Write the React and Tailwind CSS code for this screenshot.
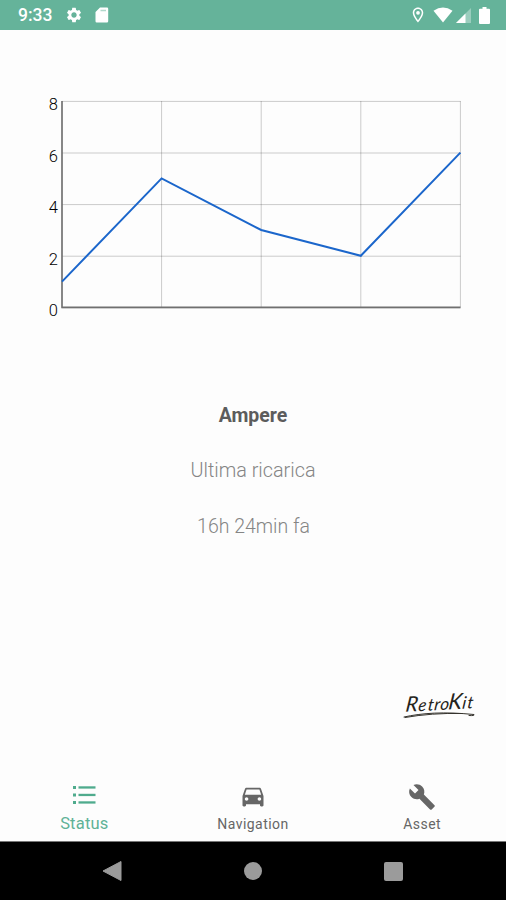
import React from 'react';
import { MdSettings, MdDirectionsCar, MdBuild, MdOutlineLocationOn } from 'react-icons/md';

const points = [1, 5, 3, 2, 6];
const ticks = [8, 6, 4, 2, 0];

const LineChart = () => {
  const left = 62;
  const top = 5;
  const stepX = 99.6;
  const unitY = 25.8;
  const bottom = top + unitY * 8;
  const line = points.map((v, i) => `${left + i * stepX},${bottom - v * unitY}`).join(' ');

  return (
    <svg className="block w-full h-[225px]" viewBox="0 0 506 225">
      {ticks.map((t) => (
        <g key={t}>
          <line x1={left} x2={460.5} y1={bottom - t * unitY + 0.4} y2={bottom - t * unitY + 0.4} stroke="#000" strokeOpacity="0.2" />
          <text x="58" y={bottom - t * unitY + 9} textAnchor="end" className="font-['Roboto',sans-serif] text-[16.5px] font-light" fill="#000">
            {t}
          </text>
        </g>
      ))}
      {points.map((_, i) => (
        <line key={i} x1={left + i * stepX} x2={left + i * stepX} y1={top} y2={bottom} stroke="#000" strokeOpacity="0.2" />
      ))}
      <path d={`M${left} ${top}V${bottom}H460.5`} fill="none" stroke="#707070" strokeWidth="1.6" />
      <polyline points={line} fill="none" stroke="#1b66cb" strokeWidth="2" />
    </svg>
  );
};

const StatusBar = () => (
  <div className="h-[30px] bg-[#65b39a] text-white flex items-center justify-between pl-[18px] pr-[16px]">
    <div className="flex items-center">
      <span className="text-[17.5px] font-medium leading-none w-[47px] pt-[2px]">9:33</span>
      <MdSettings size={18} />
      <svg className="ml-3 w-[14px] h-[16px]" viewBox="0 0 14 16">
        <path d="M5 .5h7A1.2 1.2 0 0 1 13.2 1.7v12.6A1.2 1.2 0 0 1 12 15.5H1.7A1.2 1.2 0 0 1 .5 14.3V5z" fill="#fff" />
        <path d="M5.5 3.5H11" stroke="#65b39a" strokeOpacity="0.5" strokeWidth="1.5" />
      </svg>
    </div>
    <div className="flex items-center">
      <MdOutlineLocationOn size={18} />
      <svg className="ml-[6px] mr-px w-[20px] h-[16px]" viewBox="0 0 20 16">
        <path d="M10 15.5L.5 3.8Q10-3 19.5 3.8z" fill="#fff" />
      </svg>
      <svg className="ml-[2px] w-[15px] h-[15px]" viewBox="0 0 15 15">
        <path d="M15 0v15H0z" fill="#fff" fillOpacity="0.35" />
        <path d="M9.5 5.5V15H0z" fill="#fff" />
      </svg>
      <svg className="ml-[8px] w-[11px] h-[17px]" viewBox="0 0 11 17">
        <path d="M3.5 0h4v1.7H10q1 0 1 1V16q0 1-1 1H1q-1 0-1-1V2.7q0-1 1-1h2.5z" fill="#fff" />
      </svg>
    </div>
  </div>
);

const Logo = () => (
  <svg className="w-[84px] h-[46px]" viewBox="0 -14 84 46">
    <text y="21" className="font-['Lato',sans-serif] italic text-[17px]" fill="#252420" transform="rotate(-3 38 20) skewX(-10) translate(3.5 0)">
      <tspan x="3" className="text-[21px]">R</tspan>
      <tspan x="16 25.5 32 38">etro</tspan>
      <tspan x="46" className="text-[22px]">K</tspan>
      <tspan x="60 65">it</tspan>
    </text>
    <path d="M2 28C20 24 42 22.5 72 25.5Q73 27 67 26.5M3 28.5C20 25.5 40 24 60 24.5" fill="none" stroke="#35332d" strokeWidth="1" strokeLinecap="round" />
  </svg>
);

const ListIcon = () => (
  <svg className="w-[24px] h-[28px]" viewBox="0 0 24 28" fill="#4fab8d">
    {[7, 14.5, 22].map((y) => (
      <g key={y}>
        <rect x="1" y={y} width="3" height="3" />
        <rect x="6.5" y={y + 0.3} width="17" height="2.3" />
      </g>
    ))}
  </svg>
);

const App = () => {
  return (
    <div className="w-full h-[900px] flex flex-col bg-[#fdfdfd] font-['Roboto',sans-serif] overflow-hidden">
      <StatusBar />

      {/* Chart */}
      <div className="pt-[66px]">
        <LineChart />
      </div>

      {/* Last charge */}
      <div className="pt-[81px] flex flex-col items-center gap-[27px] text-[19.8px] leading-[28px] text-[#858585] font-light">
        <h1 className="text-[19.5px] font-bold text-[#5c5c5c]">Ampere</h1>
        <p>Ultima ricarica</p>
        <p className="text-[19.5px] pl-px pt-px">16h 24min fa</p>
      </div>

      <div className="flex-1 flex justify-end items-end pr-[20px] pb-[58px]">
        <Logo />
      </div>

      {/* Bottom tabs */}
      <div className="h-[62px] grid grid-cols-3 text-[#666666]">
        <div className="flex flex-col items-center text-[#5fb297]">
          <ListIcon />
          <span className="text-[16.5px] leading-[20px] pt-[7px] tracking-[0.2px]">Status</span>
        </div>
        <div className="flex flex-col items-center">
          <MdDirectionsCar size={28} className="mt-[3px]" />
          <span className="text-[14px] leading-[20px] pt-[4px] tracking-[0.45px]">Navigation</span>
        </div>
        <div className="flex flex-col items-center">
          <MdBuild size={28} className="mt-[4px]" />
          <span className="text-[14px] leading-[20px] pt-[3px] pl-px tracking-[0.45px]">Asset</span>
        </div>
      </div>

      {/* Android buttons */}
      <div className="h-[59px] bg-black border-t border-[#777777] flex justify-center">
        <div className="w-[140px] flex items-center justify-center">
          <svg className="w-[20px] h-[22px] mr-[2px]" viewBox="0 0 20 22">
            <path d="M19 1.5v19L1 11z" fill="#9b9b9b" stroke="#9b9b9b" strokeLinejoin="round" />
          </svg>
        </div>
        <div className="w-[140px] flex items-center justify-center">
          <div className="w-[18px] h-[18px] rounded-full bg-[#9b9b9b]"></div>
        </div>
        <div className="w-[140px] flex items-center justify-center">
          <div className="w-[19px] h-[19px] rounded-[2px] bg-[#9b9b9b]"></div>
        </div>
      </div>
    </div>
  );
};

export default App;
